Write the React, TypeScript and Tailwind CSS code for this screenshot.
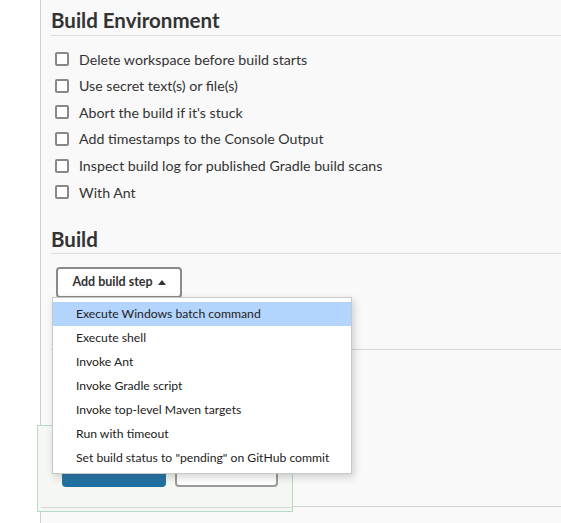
const envOptions = [
  "Delete workspace before build starts",
  "Use secret text(s) or file(s)",
  "Abort the build if it's stuck",
  "Add timestamps to the Console Output",
  "Inspect build log for published Gradle build scans",
  "With Ant",
];

const steps = [
  "Execute Windows batch command",
  "Execute shell",
  "Invoke Ant",
  "Invoke Gradle script",
  "Invoke top-level Maven targets",
  "Run with timeout",
  'Set build status to "pending" on GitHub commit',
];

export default function App() {
  return (
    <div
      className="relative flex h-[523px] w-[561px] overflow-hidden bg-white text-[#333]"
      style={{ fontFamily: 'Lato, "Noto Sans", sans-serif' }}
    >
      {/* side gutter */}
      <div className="w-[41px] shrink-0 border-r border-[#cfcfcf] bg-white" />

      <div className="flex-1 bg-[#f9f9f9] pl-[10px]">
        {/* Build Environment */}
        <h2 className="mt-[9px] border-b border-[#dddddd] pb-[3px] text-[20.5px] font-bold leading-[23px] text-[#333]">
          Build Environment
        </h2>
        <div className="flex flex-col pt-[10px]">
          {envOptions.map((label) => (
            <label key={label} className="flex h-[26.6px] items-center gap-[10px] pl-[4px]">
              <span className="h-[14px] w-[14px] rounded-[2px] border-2 border-[#888] bg-white" />
              <span className="whitespace-nowrap text-[14.2px] text-[#333]">{label}</span>
            </label>
          ))}
        </div>

        {/* Build */}
        <h2 className="mt-[22px] border-b border-[#dddddd] pb-[2px] text-[20.5px] font-bold leading-[23px] text-[#333]">
          Build
        </h2>
        <div className="pl-[5px] pt-[13px]">
          <button className="flex h-[31px] w-[126px] items-center justify-center gap-[5px] rounded-[4px] border-2 border-[#8a8a8a] bg-white text-[12.5px] font-bold text-[#333]">
            Add build step
            <svg width="8" height="5" viewBox="0 0 8 5">
              <path d="M0 5 L4 0 L8 5 Z" fill="#333" />
            </svg>
          </button>
        </div>
        <div className="mt-[51px] border-t border-[#d6d6d6]" />
      </div>

      {/* bottom bar with save/apply */}
      <div className="absolute bottom-[11px] left-[37px] h-[87px] w-[256px] border border-[#b8d8c6] bg-[#f4f7f2]">
        <div className="absolute bottom-[3px] left-[3px] right-0 border-b border-[#d6d6d6]" />
        <div className="flex gap-[9px] pl-[24px] pt-[22px]">
          <div className="h-[39px] w-[104px] rounded-[4px] bg-gradient-to-b from-[#4a90c2] to-[#1a6e9f]" />
          <div className="h-[39px] w-[103px] rounded-[4px] border-2 border-[#9a9a9a] bg-white" />
        </div>
      </div>
      <div className="absolute bottom-[16px] left-[292px] right-0 border-b border-[#d0d0d0]" />

      {/* dropdown menu */}
      <div className="absolute left-[52px] top-[297px] w-[300px] border border-[#c8c8c8] bg-white pb-[3px] pt-[4px] shadow-[2px_3px_8px_rgba(0,0,0,0.18)]">
        {steps.map((s, i) => (
          <div
            key={s}
            className={`flex h-[24px] items-center whitespace-nowrap pl-[23px] text-[12.2px] text-[#222] ${i === 0 ? "bg-[#b3d4fc]" : ""}`}
          >
            {s}
          </div>
        ))}
      </div>
    </div>
  );
}
